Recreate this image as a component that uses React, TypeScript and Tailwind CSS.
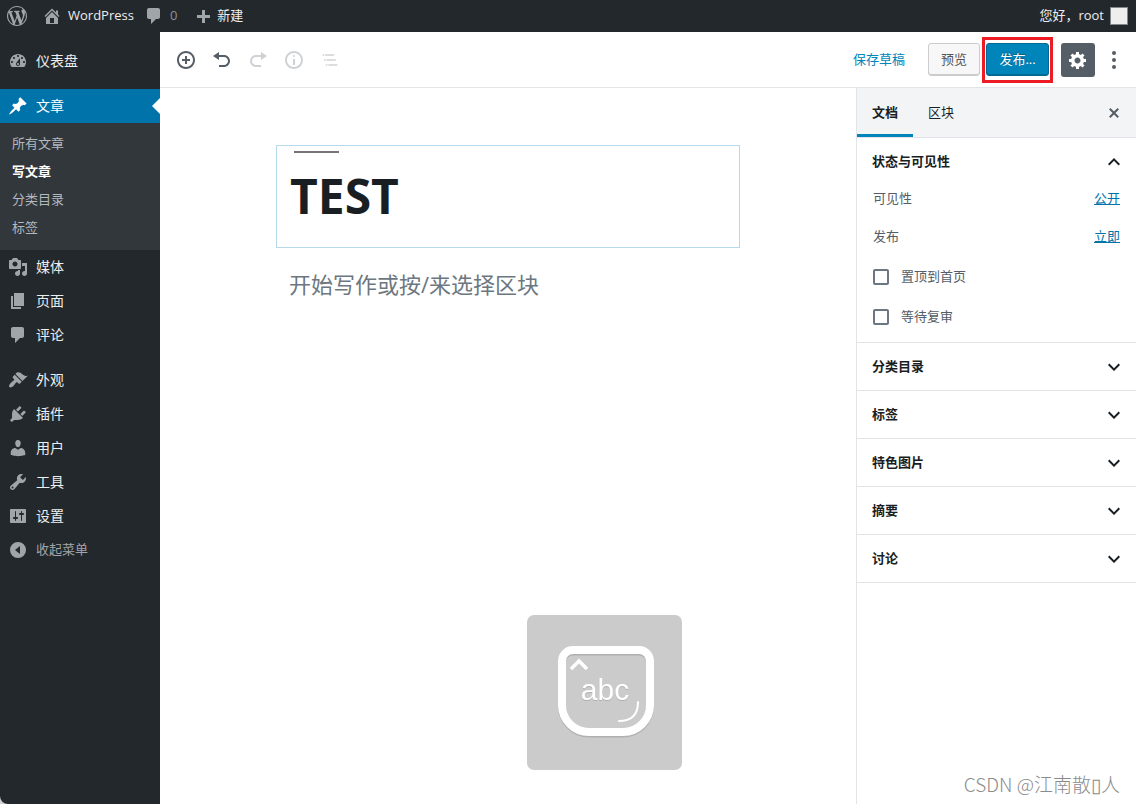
import React from 'react';
import clsx from 'clsx';

const ICONS = {
  wordpress:
    'M20 10c0-5.51-4.49-10-10-10C4.48 0 0 4.49 0 10c0 5.52 4.48 10 10 10 5.51 0 10-4.48 10-10zM7.78 15.37L4.37 6.22c.55-.02 1.17-.08 1.17-.08.5-.06.44-1.13-.06-1.11 0 0-1.45.11-2.37.11-.18 0-.37 0-.58-.01C4.12 2.69 6.87 1.11 10 1.11c2.33 0 4.45.87 6.05 2.34-.68-.11-1.65.39-1.65 1.58 0 .74.45 1.36.9 2.1.35.61.55 1.36.55 2.46 0 1.49-1.4 5-1.4 5l-3.03-8.37c.54-.02.82-.17.82-.17.5-.05.44-1.25-.06-1.22 0 0-1.44.12-2.38.12-.87 0-2.33-.12-2.33-.12-.5-.03-.56 1.2-.06 1.22l.92.08 1.26 3.41zM17.41 10c.24-.64.74-1.87.43-4.25.7 1.29 1.05 2.71 1.05 4.25 0 3.29-1.73 6.24-4.4 7.78.97-2.59 1.94-5.2 2.92-7.78zM6.1 18.09C3.12 16.65 1.11 13.53 1.11 10c0-1.3.23-2.48.72-3.59C3.25 10.3 4.67 14.2 6.1 18.09zm4.03-6.63l2.58 6.98c-.86.29-1.76.45-2.71.45-.79 0-1.57-.11-2.29-.33.81-2.38 1.62-4.74 2.42-7.1z',
  home: 'M16 8.5l1.53 1.53-1.06 1.06L10 4.6l-6.47 6.49-1.06-1.06L10 2.5l4 4v-2h2v4zm-6-2.46l6 5.99V18H4v-5.97zM12 17v-5H8v5h4z',
  plus: 'M17 7v3h-5v5H9v-5H4V7h5V2h3v5h5z',
  dashboard:
    'M3.76 16h12.48c1.1-1.37 1.76-3.11 1.76-5 0-4.42-3.58-8-8-8s-8 3.58-8 8c0 1.89.66 3.63 1.76 5zM10 4c.55 0 1 .45 1 1s-.45 1-1 1-1-.45-1-1 .45-1 1-1zM6 6c.55 0 1 .45 1 1s-.45 1-1 1-1-.45-1-1 .45-1 1-1zm8 0c.55 0 1 .45 1 1s-.45 1-1 1-1-.45-1-1 .45-1 1-1zm-5.37 5.55L12 7v6c0 1.1-.9 2-2 2s-2-.9-2-2c0-.57.24-1.08.63-1.45zM4 10c.55 0 1 .45 1 1s-.45 1-1 1-1-.45-1-1 .45-1 1-1zm12 0c.55 0 1 .45 1 1s-.45 1-1 1-1-.45-1-1 .45-1 1-1zm-5 3c0-.55-.45-1-1-1s-1 .45-1 1 .45 1 1 1 1-.45 1-1z',
  post: 'M10.44 3.02l1.82-1.82 6.36 6.35-1.83 1.82c-1.05-.68-2.48-.57-3.41.36l-.75.75c-.92.93-1.04 2.35-.35 3.41l-1.83 1.82-2.41-2.41-2.8 2.79c-.42.42-3.38 2.71-3.8 2.29s1.86-3.39 2.28-3.81l2.79-2.79L4.1 9.36l1.83-1.82c1.05.69 2.48.57 3.4-.36l.75-.75c.93-.92 1.05-2.35.36-3.41z',
  media:
    'M13 11V4c0-.55-.45-1-1-1h-1.67L9 1H5L3.67 3H2c-.55 0-1 .45-1 1v7c0 .55.45 1 1 1h10c.55 0 1-.45 1-1zM7 4.5c1.38 0 2.5 1.12 2.5 2.5S8.38 9.5 7 9.5 4.5 8.38 4.5 7 5.62 4.5 7 4.5zM14 6h5v10.5c0 1.38-1.12 2.5-2.5 2.5S14 17.88 14 16.5s1.12-2.5 2.5-2.5c.17 0 .34.02.5.05V9h-3V6zm-4 8.05V13h2v3.5c0 1.38-1.12 2.5-2.5 2.5S7 17.88 7 16.5 8.12 14 9.5 14c.17 0 .34.02.5.05z',
  page: 'M6 15V2h10v13H6zm-1 1h8v2H3V5h2v11z',
  comments:
    'M5 2h9c1.1 0 2 .9 2 2v7c0 1.1-.9 2-2 2h-2l-5 5v-5H5c-1.1 0-2-.9-2-2V4c0-1.1.9-2 2-2z',
  appearance:
    'M14.48 11.06L7.41 3.99l1.5-1.5c.5-.56 2.3-.47 3.51.32 1.21.8 1.43 1.28 2.91 2.1 1.18.64 2.45 1.26 4.45.85zm-.71.71L6.7 4.7 4.93 6.47c-.39.39-.39 1.02 0 1.41l1.06 1.06c.39.39.39 1.03 0 1.42-.6.6-1.43 1.11-2.21 1.69-.35.26-.7.53-1.01.84C1.43 14.23.4 16.08 1.4 17.07c.99 1 2.84-.03 4.18-1.36.31-.31.58-.66.85-1.02.57-.78 1.08-1.61 1.69-2.21.39-.39 1.02-.39 1.41 0l1.06 1.06c.39.39 1.02.39 1.41 0z',
  plugins:
    'M13.11 4.36L9.87 7.6 8 5.73l3.24-3.24c.35-.34 1.05-.2 1.56.32.52.51.66 1.21.31 1.55zm-8 1.77l.91-1.12 9.01 9.01-1.19.84c-.71.71-2.63 1.16-3.82 1.16H6.14L4.9 17.26c-.59.59-1.54.59-2.12 0-.59-.58-.59-1.53 0-2.12l1.24-1.24v-3.88c0-1.13.4-3.19 1.09-3.89zm7.26 3.97l3.24-3.24c.34-.35 1.04-.21 1.55.31.52.51.66 1.21.31 1.55l-3.24 3.25z',
  users:
    'M10 9.25c-2.27 0-2.73-3.44-2.73-3.44C7 4.02 7.82 2 9.97 2c2.16 0 2.98 2.02 2.71 3.81 0 0-.41 3.44-2.68 3.44zm0 2.57L12.72 10c2.39 0 4.52 2.33 4.52 4.53v2.49s-3.65 1.13-7.24 1.13c-3.65 0-7.24-1.13-7.24-1.13v-2.49c0-2.25 1.94-4.48 4.47-4.48z',
  tools:
    'M16.68 9.77c-1.34 1.34-3.3 1.67-4.95.99l-5.41 6.52c-.99.99-2.59.99-3.58 0s-.99-2.59 0-3.57l6.52-5.42c-.68-1.65-.35-3.61.99-4.95 1.28-1.28 3.12-1.62 4.72-1.06l-2.89 2.89 2.82 2.82 2.86-2.87c.53 1.58.18 3.39-1.08 4.65zM3.81 16.21c.4.39 1.04.39 1.43 0 .4-.4.4-1.04 0-1.43-.39-.4-1.03-.4-1.43 0-.39.39-.39 1.03 0 1.43z',
  settings:
    'M18 16V4c0-.55-.45-1-1-1H3c-.55 0-1 .45-1 1v12c0 .55.45 1 1 1h14c.55 0 1-.45 1-1zM8 11h1c.55 0 1 .45 1 1s-.45 1-1 1H8v1.5c0 .28-.22.5-.5.5s-.5-.22-.5-.5V13H6c-.55 0-1-.45-1-1s.45-1 1-1h1V5.5c0-.28.22-.5.5-.5s.5.22.5.5V11zm5-2h-1c-.55 0-1-.45-1-1s.45-1 1-1h1V5.5c0-.28.22-.5.5-.5s.5.22.5.5V7h1c.55 0 1 .45 1 1s-.45 1-1 1h-1v5.5c0 .28-.22.5-.5.5s-.5-.22-.5-.5V9z',
  collapse: 'M10 2a8 8 0 1 0 0 16 8 8 0 0 0 0-16zm2 4v8l-5-4z',
  insert:
    'M10 1c-5 0-9 4-9 9s4 9 9 9 9-4 9-9-4-9-9-9zm0 16c-3.9 0-7-3.1-7-7s3.1-7 7-7 7 3.1 7 7-3.1 7-7 7zm1-11H9v3H6v2h3v3h2v-3h3V9h-3V6z',
  undo: 'M12 5H7V2L1 6l6 4V7h5c2.2 0 4 1.8 4 4s-1.8 4-4 4H7v2h5c3.3 0 6-2.7 6-6s-2.7-6-6-6z',
  redo: 'M8 5h5V2l6 4-6 4V7H8c-2.2 0-4 1.8-4 4s1.8 4 4 4h5v2H8c-3.3 0-6-2.7-6-6s2.7-6 6-6z',
  info: 'M9 15h2V9H9v6zm1-10c-.5 0-1 .5-1 1s.5 1 1 1 1-.5 1-1-.5-1-1-1zm0-4c-5 0-9 4-9 9s4 9 9 9 9-4 9-9-4-9-9-9zm0 16c-3.9 0-7-3.1-7-7s3.1-7 7-7 7 3.1 7 7-3.1 7-7 7z',
  outline:
    'M5 5H3v2h2V5zm3 8h11v-2H8v2zm9-8H6v2h11V5zM7 11H5v2h2v-2zm0 8h2v-2H7v2zm3-2v2h11v-2H10z',
  gear: 'M18 12h-2.18c-.17.7-.44 1.35-.81 1.93l1.54 1.54-2.1 2.1-1.54-1.54c-.58.36-1.23.63-1.91.79V19H8v-2.18c-.68-.16-1.33-.43-1.91-.79l-1.54 1.54-2.12-2.12 1.54-1.54c-.36-.58-.63-1.23-.79-1.91H1V9.03h2.17c.16-.7.44-1.35.8-1.94L2.43 5.55l2.1-2.1 1.54 1.54c.58-.37 1.24-.64 1.93-.81V2h3v2.18c.68.16 1.33.43 1.91.79l1.54-1.54 2.12 2.12-1.54 1.54c.36.59.64 1.24.8 1.94H18V12zm-8.5 1.5c1.66 0 3-1.34 3-3s-1.34-3-3-3-3 1.34-3 3 1.34 3 3 3z',
  more: 'M10 1a2 2 0 1 0 0 4 2 2 0 0 0 0-4zm0 7a2 2 0 1 0 0 4 2 2 0 0 0 0-4zm0 7a2 2 0 1 0 0 4 2 2 0 0 0 0-4z',
  close:
    'M14.95 6.46L11.41 10l3.54 3.54-1.41 1.41L10 11.42l-3.53 3.53-1.42-1.42L8.58 10 5.05 6.47l1.42-1.42L10 8.58l3.54-3.53z',
  up: 'M7.41 15.41L12 10.83l4.59 4.58L18 14l-6-6-6 6z',
  down: 'M7.41 8.59L12 13.17l4.59-4.58L18 10l-6 6-6-6z',
};

type IconName = keyof typeof ICONS;

interface IconProps {
  name: IconName;
  box?: number;
  className?: string;
}

const Icon: React.FC<IconProps> = ({ name, box = 20, className = 'size-5' }) => (
  <svg
    viewBox={`0 0 ${box} ${box}`}
    className={clsx('shrink-0 fill-current', className)}
    aria-hidden="true"
  >
    <path fillRule="evenodd" d={ICONS[name]} />
  </svg>
);

interface MenuEntry {
  icon: IconName;
  label: string;
  children?: string[];
}

const MENU_GROUPS: MenuEntry[][] = [
  [{ icon: 'dashboard', label: '仪表盘' }],
  [
    { icon: 'post', label: '文章', children: ['所有文章', '写文章', '分类目录', '标签'] },
    { icon: 'media', label: '媒体' },
    { icon: 'page', label: '页面' },
    { icon: 'comments', label: '评论' },
  ],
  [
    { icon: 'appearance', label: '外观' },
    { icon: 'plugins', label: '插件' },
    { icon: 'users', label: '用户' },
    { icon: 'tools', label: '工具' },
    { icon: 'settings', label: '设置' },
  ],
];

const TOOLS: { icon: IconName; label: string; box?: number; disabled?: boolean }[] = [
  { icon: 'insert', label: '添加区块' },
  { icon: 'undo', label: '撤销' },
  { icon: 'redo', label: '重做', disabled: true },
  { icon: 'info', label: '内容结构', disabled: true },
  { icon: 'outline', label: '区块导航', box: 24, disabled: true },
];

const PANELS = ['分类目录', '标签', '特色图片', '摘要', '讨论'];

const AdminBar = () => (
  <header className="flex h-8 items-center bg-[#23282d] text-[13px] text-[#eee]">
    <a href="#about" aria-label="关于WordPress" className="px-[7px] text-[#a0a5aa]">
      <Icon name="wordpress" />
    </a>
    <a href="#site" className="flex items-center gap-1.5 pr-0.5 pl-2">
      <Icon name="home" className="size-5 text-[#a0a5aa]" />
      WordPress
    </a>
    <a href="#comments" className="flex items-center gap-1.5 px-2 text-[#8c9196]">
      <Icon name="comments" className="size-5 text-[#a0a5aa]" />
      0
    </a>
    <a href="#new" className="flex items-center gap-1 px-2">
      <Icon name="plus" className="size-5 translate-y-0.5 text-[#a0a5aa]" />
      新建
    </a>
    <a href="#profile" className="ml-auto flex items-center gap-1.5 pr-2">
      您好，root
      <span className="size-[18px] border border-[#82878c] bg-[#eee]" />
    </a>
  </header>
);

const MenuItem: React.FC<{ entry: MenuEntry }> = ({ entry }) => {
  const active = !!entry.children;
  return (
    <li>
      <a
        href="#menu"
        className={clsx(
          'relative flex h-[34px] items-center gap-2 pl-2 text-sm',
          active ? 'bg-[#0073aa] text-white' : 'text-[#eee]'
        )}
      >
        <Icon name={entry.icon} className={active ? 'size-5' : 'size-5 text-[#a0a5aa]'} />
        {entry.label}
        {active && (
          <span className="absolute top-[9px] right-0 border-8 border-l-0 border-transparent border-r-white" />
        )}
      </a>
      {entry.children && (
        <ul className="bg-[#32373c] pt-[7px] pb-2 text-[13px]">
          {entry.children.map((child) => (
            <li key={child}>
              <a
                href="#submenu"
                className={clsx(
                  'flex h-7 items-center px-3',
                  child === '写文章' ? 'font-bold text-white' : 'text-[#b4b9be]'
                )}
              >
                {child}
              </a>
            </li>
          ))}
        </ul>
      )}
    </li>
  );
};

const AdminMenu = () => (
  <nav className="w-40 shrink-0 rounded-bl-lg bg-[#23282d] pt-3">
    <div className="flex flex-col gap-[11px]">
      {MENU_GROUPS.map((group) => (
        <ul key={group[0].label}>
          {group.map((entry) => (
            <MenuItem key={entry.label} entry={entry} />
          ))}
        </ul>
      ))}
    </div>
    <button type="button" className="flex h-[34px] items-center gap-2 pl-2 text-[13px] text-[#a0a5aa]">
      <Icon name="collapse" />
      收起菜单
    </button>
  </nav>
);

const EditorHeader = () => (
  <div className="flex h-14 items-center border-b border-[#e2e4e7] bg-white pr-1 pl-2 text-[13px]">
    {TOOLS.map((tool) => (
      <button
        key={tool.icon}
        type="button"
        aria-label={tool.label}
        disabled={tool.disabled}
        className="flex size-9 items-center justify-center text-[#555d66] disabled:text-[#cfd2d5]"
      >
        <Icon name={tool.icon} box={tool.box} />
      </button>
    ))}
    <button type="button" className="mr-[23px] ml-auto text-[#0085ba]">
      保存草稿
    </button>
    <button
      type="button"
      className="h-[33px] rounded-[3px] border border-[#ccc] bg-[#f7f7f7] px-3 text-[#555] shadow-[inset_0_-1px_0_#ccc]"
    >
      预览
    </button>
    <div className="relative mr-3 ml-1.5">
      <button
        type="button"
        className="h-[33px] w-[63px] rounded-[3px] border border-[#006a95] bg-[#0085ba] text-white shadow-[inset_0_-1px_0_#006a95] text-shadow-[0_-1px_1px_#005d82]"
      >
        发布...
      </button>
      <span className="pointer-events-none absolute -inset-x-1 -top-1.5 -bottom-[7px] border-3 border-[#ed1c24]" />
    </div>
    <button
      type="button"
      aria-label="设置"
      className="flex size-[34px] items-center justify-center rounded-[3px] bg-[#555d66] text-white"
    >
      <Icon name="gear" />
    </button>
    <button
      type="button"
      aria-label="更多工具和选项"
      className="flex h-9 w-[37px] items-center justify-center text-[#555d66]"
    >
      <Icon name="more" />
    </button>
  </div>
);

// rounded key cap, wider radius on the bottom corners
const KEY_CAP =
  'M46 35h66a11 11 0 0 1 11 11v44a27 27 0 0 1-27 27H62a27 27 0 0 1-27-27V46a11 11 0 0 1 11-11z';

// Input method indicator floating over the editor
const ImeHud = () => (
  <svg
    viewBox="0 0 155 155"
    className="pointer-events-none absolute right-[174px] bottom-[34px] size-[155px]"
    aria-hidden="true"
  >
    <rect width="155" height="155" rx="7" fill="#cbcbcb" />
    <path fill="none" stroke="#b0b0b0" strokeWidth="8" d={KEY_CAP} transform="translate(0 1.5)" />
    <g fill="none" stroke="#fff">
      <path strokeWidth="8" d={KEY_CAP} />
      <path strokeWidth="3.5" d="M44 54l8-8 8 8" />
      <path strokeWidth="2" strokeLinecap="round" d="M111 87q0 19-19 19" />
    </g>
    <text
      x="78"
      y="85"
      textAnchor="middle"
      fontSize="30"
      fill="#fff"
      className="font-['Liberation_Sans'] drop-shadow-[0_1px_0_#b0b0b0]"
    >
      abc
    </text>
  </svg>
);

const Canvas = () => (
  <main className="relative min-w-0 flex-1 bg-white pt-[57px]">
    <div className="mx-auto max-w-[464px]">
      <div className="relative border border-[#b5d9ea] px-[13px] pt-[13px] pb-4">
        <span className="absolute top-[5px] left-[17px] h-0.5 w-[45px] bg-[#757575]" />
        <input
          type="text"
          aria-label="添加标题"
          defaultValue="TEST"
          className="block h-[72px] w-full text-5xl font-bold text-[#191e23] outline-none"
        />
      </div>
      <textarea
        rows={1}
        aria-label="正文"
        placeholder="开始写作或按/来选择区块"
        className="mt-[18px] block h-9 w-full resize-none overflow-hidden px-[13px] text-[22px] leading-9 outline-none placeholder:text-[#6c7781]"
      />
    </div>
    <ImeHud />
  </main>
);

const Settings = () => (
  <aside className="w-[280px] shrink-0 border-l border-[#e2e4e7] bg-white text-[13px] text-[#191e23]">
    <div className="flex h-[50px] items-stretch border-b border-[#e2e4e7] bg-[#f3f4f5] pr-3">
      <button type="button" className="border-b-3 border-[#0085ba] px-[15px] pt-[3px] font-bold">
        文档
      </button>
      <button type="button" className="px-[15px]">
        区块
      </button>
      <button type="button" aria-label="关闭设置" className="ml-auto text-[#555d66]">
        <Icon name="close" />
      </button>
    </div>
    <section className="border-b border-[#e2e4e7] pb-3 text-[#555d66]">
      <button
        type="button"
        className="flex h-12 w-full items-center justify-between pr-2.5 pl-[15px] font-bold text-[#191e23]"
      >
        状态与可见性
        <Icon name="up" box={24} className="size-6" />
      </button>
      <div className="flex flex-col gap-3 px-4">
        <div className="flex h-[26px] items-center justify-between">
          <span>可见性</span>
          <button type="button" className="text-[#0073aa] underline">
            公开
          </button>
        </div>
        <div className="flex h-[26px] items-center justify-between">
          <span>发布</span>
          <button type="button" className="text-[#0073aa] underline">
            立即
          </button>
        </div>
      </div>
      <div className="mt-3.5 flex flex-col gap-3.5 px-4">
        {['置顶到首页', '等待复审'].map((label) => (
          <label key={label} className="flex h-[26px] items-center gap-3">
            <input
              type="checkbox"
              className="size-4 appearance-none rounded-xs border-2 border-[#6c7781] bg-white"
            />
            {label}
          </label>
        ))}
      </div>
    </section>
    {PANELS.map((title) => (
      <button
        key={title}
        type="button"
        className="flex h-12 w-full items-center justify-between border-b border-[#e2e4e7] pr-2.5 pl-[15px] font-bold"
      >
        {title}
        <Icon name="down" box={24} className="size-6" />
      </button>
    ))}
  </aside>
);

export default function App() {
  return (
    <div className="relative flex min-h-screen flex-col bg-[#d0d0d0] font-['Open_Sans','Noto_Sans_CJK_SC',sans-serif]">
      <AdminBar />
      <div className="flex flex-1">
        <AdminMenu />
        <div className="flex min-w-0 flex-1 flex-col">
          <EditorHeader />
          <div className="flex flex-1">
            <Canvas />
            <Settings />
          </div>
        </div>
      </div>
      <p className="pointer-events-none absolute right-4 bottom-1.5 font-['Noto_Sans_CJK_SC',sans-serif] text-[19px] font-light text-[#8c8c8c]">
        CSDN @江南散▯人
      </p>
    </div>
  );
}
